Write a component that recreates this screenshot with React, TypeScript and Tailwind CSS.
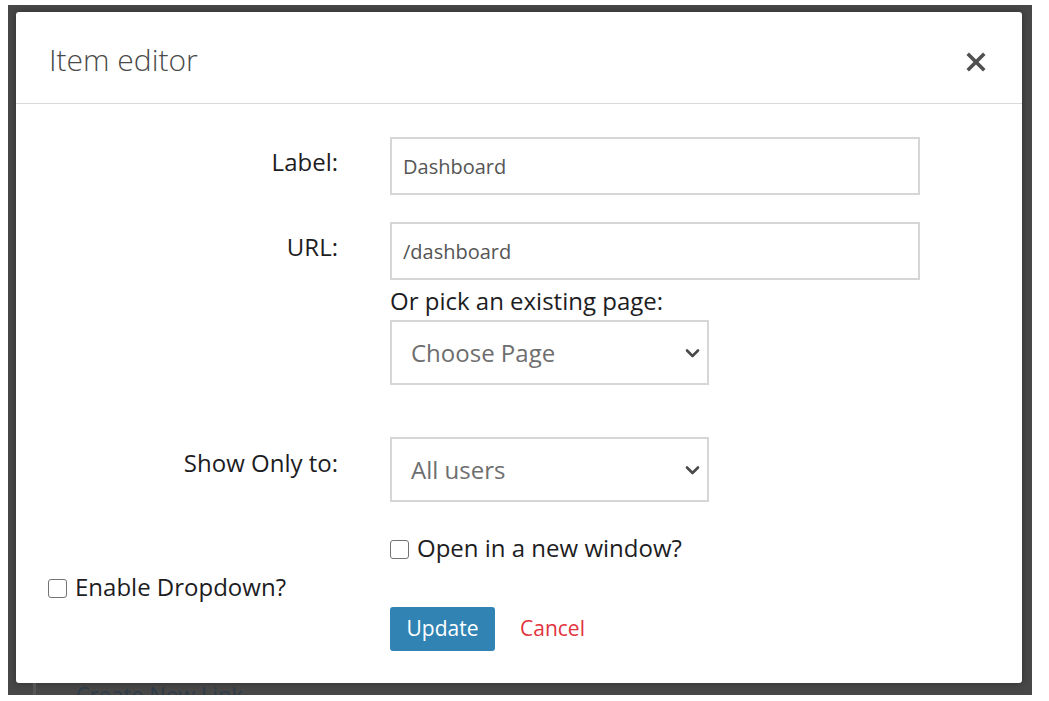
import React from "react";

const font = { fontFamily: '"Open Sans", "Noto Sans", sans-serif' };

function Chevron() {
  return (
    <svg width="15" height="10" viewBox="0 0 15 10" className="shrink-0">
      <path d="M2 2.5 L7.5 8 L13 2.5" fill="none" stroke="#4a4a4a" strokeWidth="2.6" strokeLinecap="round" strokeLinejoin="round" />
    </svg>
  );
}

function FakeSelect({ value }: { value: string }) {
  return (
    <div className="flex h-[65px] w-[319px] items-center justify-between border-2 border-[#d6d6d6] pl-[19px] pr-[7px] text-[24px] text-[#6e6e6e]">
      <span>{value}</span>
      <Chevron />
    </div>
  );
}

function Checkbox({ label }: { label: string }) {
  return (
    <label className="flex h-[30px] items-center gap-[8px] text-[24px] leading-[30px] text-[#1d1d1f]">
      <span className="mt-[2px] block h-[19px] w-[19px] rounded-[3px] border-[1.5px] border-[#737373] bg-white" />
      <span>{label}</span>
    </label>
  );
}

export default function App() {
  return (
    <div className="h-[701px] w-[1049px] overflow-hidden bg-white pl-[8px] pt-[5px]" style={font}>
      <div className="flex h-[690px] w-[1024px] flex-col overflow-hidden bg-[#474747] pl-[8px] pt-[7px]">
        <div className="h-[671px] w-[1006px] shrink-0 rounded-[3px] bg-white shadow-[0_0_6px_rgba(0,0,0,0.35)]">
          {/* header */}
          <div className="flex h-[92px] items-start justify-between border-b border-[#d9d9d9] pl-[33px] pr-[36px] pt-[28px]">
            <h2 className="text-[30px] font-light leading-[40px] text-[#4a4a4a]">Item editor</h2>
            <svg width="20" height="20" viewBox="0 0 20 20" className="mt-[12px]">
              <path d="M3 3 L17 17 M17 3 L3 17" stroke="#505050" strokeWidth="3.6" strokeLinecap="square" />
            </svg>
          </div>

          {/* body */}
          <div className="flex flex-col pl-[32px] pt-[33px]">
            <div className="flex gap-[52px]">
              <div className="w-[290px] pt-[10px] text-right text-[24px] leading-[30px] text-[#1d1d1f]">Label:</div>
              <input
                readOnly
                defaultValue="Dashboard"
                className="h-[58px] w-[530px] border-2 border-[#d6d6d6] px-[11px] text-[20px] text-[#555] outline-none"
              />
            </div>

            <div className="mt-[27px] flex gap-[52px]">
              <div className="w-[290px] pt-[10px] text-right text-[24px] leading-[30px] text-[#1d1d1f]">URL:</div>
              <div className="flex flex-col">
                <input
                  readOnly
                  defaultValue="/dashboard"
                  className="h-[58px] w-[530px] border-2 border-[#d6d6d6] px-[11px] text-[20px] text-[#555] outline-none"
                />
                <div className="mt-[6px] text-[24px] leading-[30px] text-[#1d1d1f]">Or pick an existing page:</div>
                <div className="mt-[4px]">
                  <FakeSelect value="Choose Page" />
                </div>
              </div>
            </div>

            <div className="mt-[52px] flex gap-[52px]">
              <div className="w-[290px] pt-[11px] text-right text-[24px] leading-[30px] text-[#1d1d1f]">Show Only to:</div>
              <div className="flex flex-col">
                <FakeSelect value="All users" />
                <div className="mt-[31px]">
                  <Checkbox label="Open in a new window?" />
                </div>
              </div>
            </div>

            <div className="mt-[9px]">
              <Checkbox label="Enable Dropdown?" />
            </div>

            <div className="ml-[342px] mt-[5px] flex items-center gap-[25px]">
              <button className="h-[44px] w-[105px] rounded-[3px] bg-[#3083b3] text-[21px] text-white">Update</button>
              <span className="text-[21px] text-[#e3323d]">Cancel</span>
            </div>
          </div>
        </div>

        {/* page content behind the overlay */}
        <div className="flex h-[20px] shrink-0">
          <div className="ml-[17px] h-full border-l-[3px] border-[#565656]" />
          <div className="ml-[40px] text-[22px] leading-[22px] text-[#2e3c4b]">Create New Link</div>
        </div>
      </div>
    </div>
  );
}
